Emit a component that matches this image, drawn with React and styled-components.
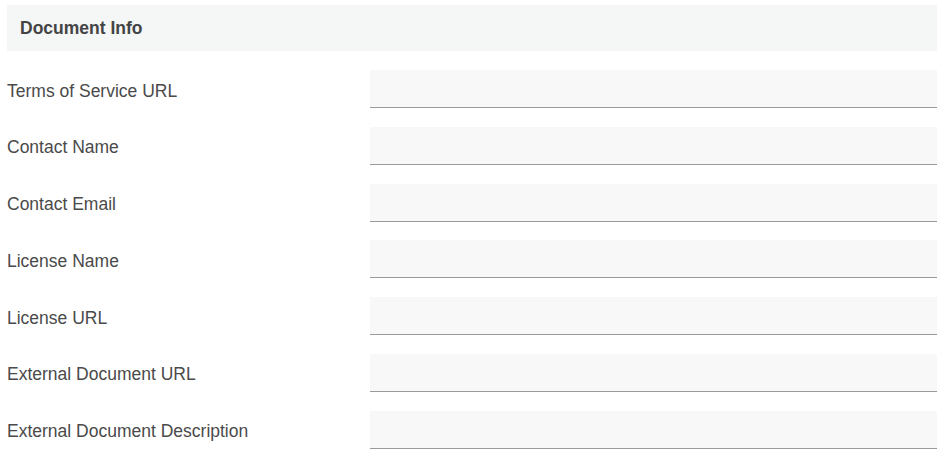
import React from 'react';
import styled, { createGlobalStyle } from 'styled-components';

const GlobalStyle = createGlobalStyle`
  body, html {
    margin: 0;
    background: #ffffff;
    font-family: "Liberation Sans", Arial, sans-serif;
  }
`;

const Page = styled.div`
  padding: 5px 0 0 7px;
`;

const Header = styled.div`
  height: 46px;
  background-color: #f5f6f6;
  display: flex;
  align-items: center;
  padding-left: 13px;
  font-size: 17.5px;
  font-weight: bold;
  color: #444444;
`;

const Form = styled.div`
  display: flex;
  flex-direction: column;
  gap: 18.8px;
  margin-top: 19px;
`;

const Row = styled.div`
  display: grid;
  grid-template-columns: 363px 1fr;
  align-items: center;
`;

const Label = styled.label`
  font-size: 17.5px;
  color: #4a4a4a;
  padding-top: 4px;
`;

const Input = styled.input`
  height: 37px;
  border: none;
  border-bottom: 1px solid #9a9a9a;
  background-color: #f8f8f8;
  padding: 0 10px;
  font-size: 16px;
  outline: none;
  box-sizing: content-box;
`;

const fields = [
  'Terms of Service URL',
  'Contact Name',
  'Contact Email',
  'License Name',
  'License URL',
  'External Document URL',
  'External Document Description',
];

export default function App() {
  return (
    <>
      <GlobalStyle />
      <Page>
        <Header>Document Info</Header>
        <Form>
          {fields.map((f) => (
            <Row key={f}>
              <Label>{f}</Label>
              <Input type="text" />
            </Row>
          ))}
        </Form>
      </Page>
    </>
  );
}
